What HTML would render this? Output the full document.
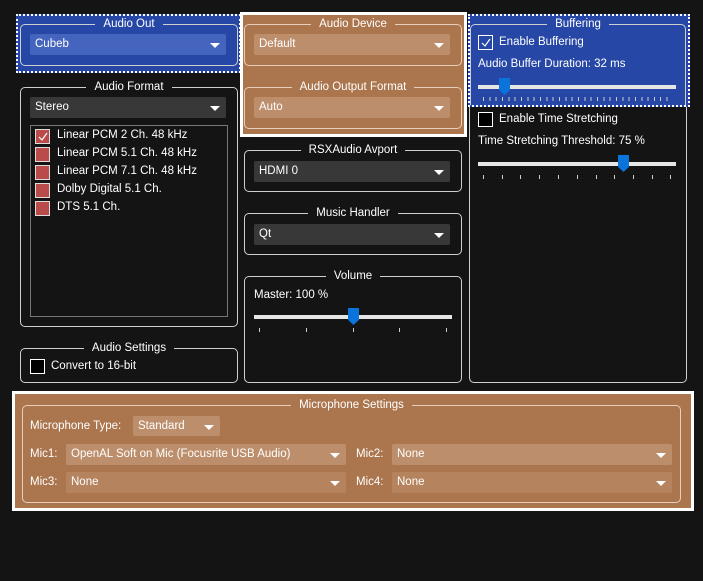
<!DOCTYPE html>
<html><head><style>
*{box-sizing:border-box;margin:0;padding:0}
body{width:703px;height:581px;background:#141414;font-family:"Liberation Sans",sans-serif;font-size:11.5px;color:#fff;position:relative;overflow:hidden}
.a{position:absolute}
.g{position:absolute;border:1px solid #cfcfcf;border-radius:5px}
.t{position:absolute;top:-8px;left:0;right:0;text-align:center;line-height:14px;font-size:11.5px}
.t span{padding:0 8px;background:inherit}
.cb{position:absolute;height:21px;border-radius:2px;padding-left:5px;line-height:21px;font-size:11.5px}
.cb:after{content:"";position:absolute;right:6px;top:9px;border-left:5px solid transparent;border-right:5px solid transparent;border-top:5px solid #fff}
.chk{position:absolute;width:15px;height:15px}
.tr{position:absolute;height:4px;background:#e6e6e6}
.hd{position:absolute;width:11px;height:17px;background:#0a74da;clip-path:polygon(0 0,100% 0,100% 70%,50% 100%,0 70%)}
.tk{position:absolute;width:1px;height:4px;background:#ccc}
</style></head><body>
<div class="a" style="left:16px;top:14px;width:225px;height:59px;background:#2647a6;border:2px dotted #fff"></div>
<div class="g" style="left:20px;top:24px;width:218px;height:42px;background:#2647a6"><div class="t"><span style="background:#2647a6">Audio Out</span></div></div>
<div class="cb" style="left:30px;top:34px;width:196px;background:#4464be">Cubeb</div>
<div class="a" style="left:240px;top:12px;width:227px;height:125px;background:#ab754d;border:3px solid #fff"></div>
<div class="g" style="left:244px;top:24px;width:218px;height:42px;border-color:#e8cfbb"><div class="t"><span style="background:#ab754d">Audio Device</span></div></div>
<div class="cb" style="left:254px;top:34px;width:196px;background:#bd8e6b">Default</div>
<div class="g" style="left:244px;top:87px;width:218px;height:42px;border-color:#e8cfbb"><div class="t"><span style="background:#ab754d">Audio Output Format</span></div></div>
<div class="cb" style="left:254px;top:97px;width:196px;background:#bd8e6b">Auto</div>
<div class="g" style="left:469px;top:24px;width:218px;height:359px"></div>
<div class="a" style="left:468px;top:14px;width:222px;height:93px;background:#2647a6;border:2px dotted #fff"></div>
<div class="a" style="left:470px;top:24px;width:216px;height:81px;border:1px solid #cfcfcf;border-bottom:none;border-radius:5px 5px 0 0"><div class="t"><span style="background:#2647a6">Buffering</span></div></div>
<div class="chk" style="left:478px;top:35px;border:1px solid #fff"><svg width="13" height="13"><path d="M3 7l3 3 5-7" stroke="#fff" fill="none" stroke-width="1.2"/></svg></div>
<div class="a" style="left:499px;top:36px">Enable Buffering</div>
<div class="a" style="left:478px;top:58px">Audio Buffer Duration: 32 ms</div>
<div class="tr" style="left:478px;top:85px;width:198px"></div>
<div class="hd" style="left:499px;top:78px"></div>
<div class="chk" style="left:478px;top:112px;border:1px solid #fff;background:#000"></div>
<div class="a" style="left:499px;top:113px">Enable Time Stretching</div>
<div class="a" style="left:478px;top:135px">Time Stretching Threshold: 75 %</div>
<div class="tr" style="left:478px;top:162px;width:198px"></div>
<div class="hd" style="left:618px;top:155px"></div>
<div class="g" style="left:20px;top:87px;width:218px;height:240px;background:#141414"><div class="t"><span style="background:#141414">Audio Format</span></div></div>
<div class="cb" style="left:30px;top:97px;width:196px;background:#383838">Stereo</div>
<div class="a" style="left:30px;top:125px;width:198px;height:192px;border:1px solid #777"></div>
<div class="chk" style="left:35px;top:129px;background:#b94b4b;border:1px solid #ddd"><svg width="13" height="13"><path d="M3 7l3 3 5-7" stroke="#fff" fill="none" stroke-width="1.2"/></svg></div>
<div class="a" style="left:57px;top:129px">Linear PCM 2 Ch. 48 kHz</div>
<div class="chk" style="left:35px;top:147px;background:#b94b4b;border:1px solid #ddd"></div>
<div class="a" style="left:57px;top:147px">Linear PCM 5.1 Ch. 48 kHz</div>
<div class="chk" style="left:35px;top:165px;background:#b94b4b;border:1px solid #ddd"></div>
<div class="a" style="left:57px;top:165px">Linear PCM 7.1 Ch. 48 kHz</div>
<div class="chk" style="left:35px;top:183px;background:#b94b4b;border:1px solid #ddd"></div>
<div class="a" style="left:57px;top:183px">Dolby Digital 5.1 Ch.</div>
<div class="chk" style="left:35px;top:201px;background:#b94b4b;border:1px solid #ddd"></div>
<div class="a" style="left:57px;top:201px">DTS 5.1 Ch.</div>
<div class="g" style="left:20px;top:348px;width:218px;height:35px;background:#141414"><div class="t"><span style="background:#141414">Audio Settings</span></div></div>
<div class="chk" style="left:30px;top:359px;border:1px solid #fff;background:#000"></div>
<div class="a" style="left:51px;top:360px">Convert to 16-bit</div>
<div class="g" style="left:244px;top:150px;width:218px;height:42px;background:#141414"><div class="t"><span style="background:#141414">RSXAudio Avport</span></div></div>
<div class="cb" style="left:254px;top:161px;width:196px;background:#383838">HDMI 0</div>
<div class="g" style="left:244px;top:213px;width:218px;height:42px;background:#141414"><div class="t"><span style="background:#141414">Music Handler</span></div></div>
<div class="cb" style="left:254px;top:224px;width:196px;background:#383838">Qt</div>
<div class="g" style="left:244px;top:276px;width:218px;height:107px;background:#141414"><div class="t"><span style="background:#141414">Volume</span></div></div>
<div class="a" style="left:254px;top:289px">Master: 100 %</div>
<div class="tr" style="left:254px;top:315px;width:198px"></div>
<div class="hd" style="left:348px;top:308px"></div>
<div class="tk" style="left:259px;top:328px"></div><div class="tk" style="left:306px;top:328px"></div><div class="tk" style="left:353px;top:328px"></div><div class="tk" style="left:399px;top:328px"></div><div class="tk" style="left:446px;top:328px"></div>
<div class="tk" style="left:483px;top:175px"></div><div class="tk" style="left:502px;top:175px"></div><div class="tk" style="left:520px;top:175px"></div><div class="tk" style="left:539px;top:175px"></div><div class="tk" style="left:558px;top:175px"></div><div class="tk" style="left:577px;top:175px"></div><div class="tk" style="left:596px;top:175px"></div><div class="tk" style="left:614px;top:175px"></div><div class="tk" style="left:633px;top:175px"></div><div class="tk" style="left:652px;top:175px"></div><div class="tk" style="left:670px;top:175px"></div>
<div style="position:absolute;left:483px;top:97px;width:190px;height:4px;background:repeating-linear-gradient(90deg,#ccc 0 1px,transparent 1px 6.33px)"></div>
<div class="a" style="left:12px;top:391px;width:682px;height:120px;background:#ab754d;border:3px solid #fff"></div>
<div class="g" style="left:22px;top:405px;width:659px;height:98px;border-color:#e8cfbb"><div class="t"><span style="background:#ab754d">Microphone Settings</span></div></div>
<div class="a" style="left:30px;top:420px">Microphone Type:</div>
<div class="cb" style="left:133px;top:416px;width:87px;background:#bd8e6b;height:20px;line-height:20px">Standard</div>
<div class="a" style="left:30px;top:448px">Mic1:</div>
<div class="cb" style="left:66px;top:444px;width:280px;background:#bd8e6b">OpenAL Soft on Mic (Focusrite USB Audio)</div>
<div class="a" style="left:356px;top:448px">Mic2:</div>
<div class="cb" style="left:392px;top:444px;width:280px;background:#bd8e6b">None</div>
<div class="a" style="left:30px;top:476px">Mic3:</div>
<div class="cb" style="left:66px;top:472px;width:280px;background:#b5845f">None</div>
<div class="a" style="left:356px;top:476px">Mic4:</div>
<div class="cb" style="left:392px;top:472px;width:280px;background:#b5845f">None</div>
</body></html>
